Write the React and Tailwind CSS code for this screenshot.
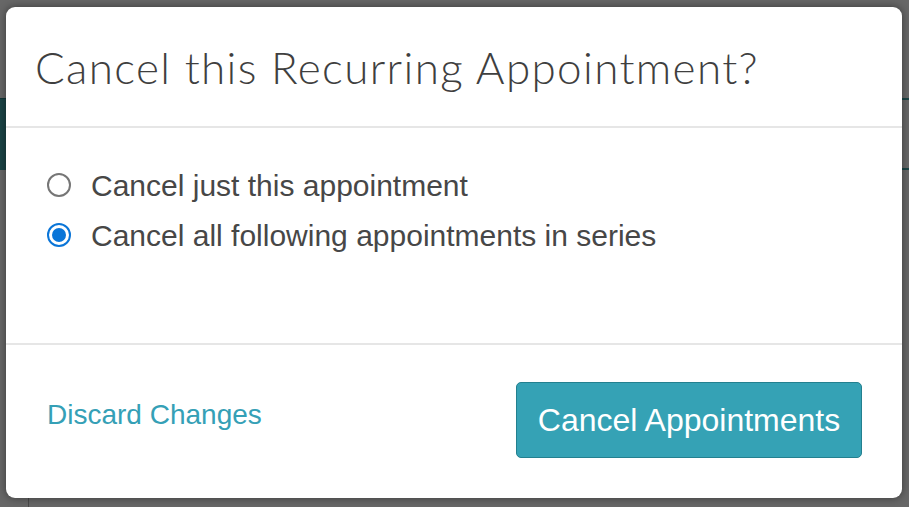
import { useState } from "react";

const options = [
  { id: "one", label: "Cancel just this appointment" },
  { id: "all", label: "Cancel all following appointments in series" },
];

function Radio({ checked }) {
  if (checked) {
    return (
      <span className="flex h-[24px] w-[24px] shrink-0 items-center justify-center rounded-full border-2 border-[#0a75d8] bg-white">
        <span className="h-[14px] w-[14px] rounded-full bg-[#0a75d8]" />
      </span>
    );
  }
  return <span className="h-[24px] w-[24px] shrink-0 rounded-full border-2 border-[#767676] bg-white" />;
}

export default function App() {
  const [choice, setChoice] = useState("all");

  return (
    <div className="relative h-[507px] w-[909px] overflow-hidden bg-[#676767] font-['Liberation_Sans',Arial,sans-serif]">
      {/* page behind the overlay */}
      <div className="h-[98px]" />
      <div className="flex h-[72px]">
        <div className="flex-1 border-t border-[#123536] bg-[#1b4446]" />
        <div className="w-[7px] border-y-2 border-[#1b4446]" />
      </div>
      <div className="ml-[28px] mt-[327px] h-[20px] w-px bg-[#4a4a4a]" />

      {/* Modal */}
      <div className="absolute left-[6px] top-[7px] flex h-[491px] w-[896px] flex-col rounded-[9px] bg-white shadow-[0_0_8px_rgba(0,0,0,0.45)]">
        <div className="flex h-[121px] items-center border-b-2 border-[#e6e6e6] pl-[29px]">
          <h1 className="font-['Lato',sans-serif] text-[44px] font-light tracking-[1.35px] text-[#3f3f3f]">
            Cancel this Recurring Appointment?
          </h1>
        </div>

        <div className="h-[217px] border-b-2 border-[#e6e6e6] pl-[41px] pt-[32px]">
          {options.map((opt) => (
            <label
              key={opt.id}
              onClick={() => setChoice(opt.id)}
              className="flex h-[50px] cursor-pointer items-center gap-[20px] text-[30px] text-[#474747]"
            >
              <Radio checked={choice === opt.id} />
              <span>{opt.label}</span>
            </label>
          ))}
        </div>

        <div className="flex flex-1 items-start justify-between pl-[41px] pr-[40px] pt-[37px]">
          <a className="mt-[17px] text-[28px] leading-[32px] text-[#35a0b6]" href="#">
            Discard Changes
          </a>
          <button className="h-[76px] w-[346px] rounded-[5px] border border-[#23808f] bg-[#35a2b5] text-[32px] text-white">
            Cancel Appointments
          </button>
        </div>
      </div>
    </div>
  );
}
